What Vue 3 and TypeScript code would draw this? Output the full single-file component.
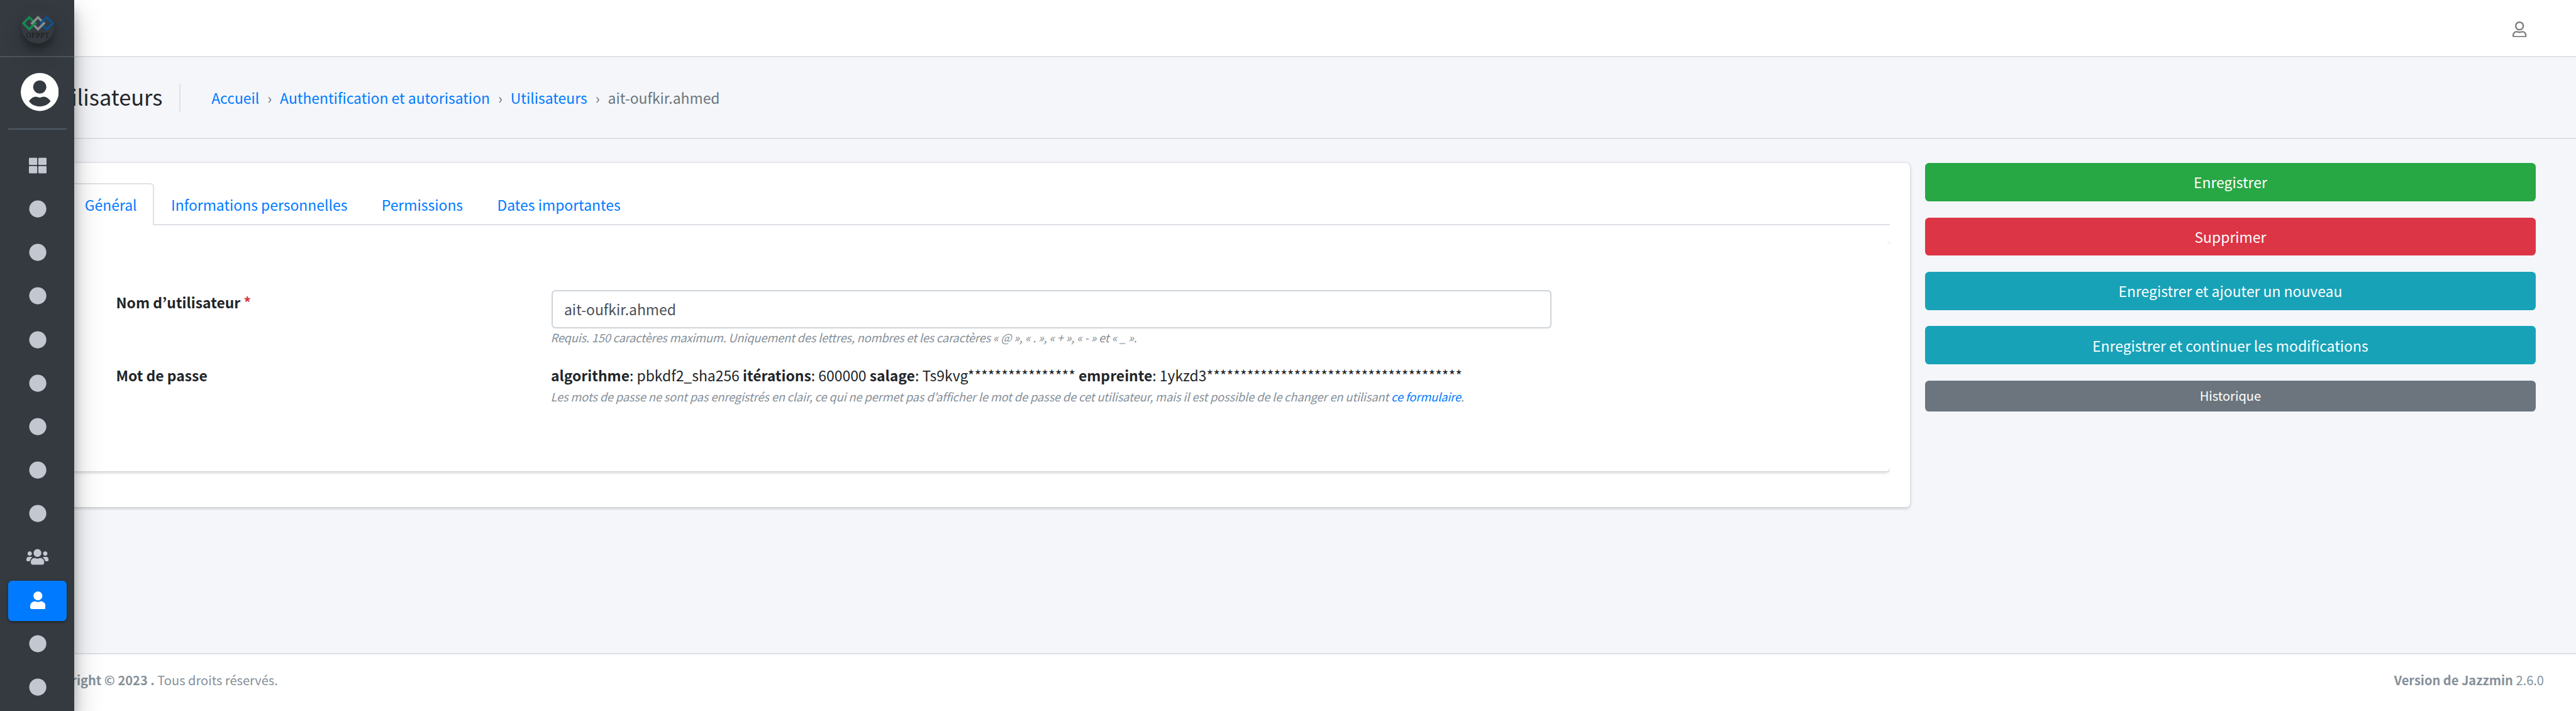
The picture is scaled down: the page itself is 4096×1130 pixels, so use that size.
<script setup lang="ts">
interface Icon {
  viewBox: string
  width: number
  d: string
}

interface NavItem {
  icon: Icon
  active?: boolean
}

interface Action {
  label: string
  kind: 'success' | 'danger' | 'info' | 'secondary'
}

const dashboard: Icon = {
  viewBox: '0 0 512 512',
  width: 28.16,
  d: 'M296 32h192c13.255 0 24 10.745 24 24v160c0 13.255-10.745 24-24 24H296c-13.255 0-24-10.745-24-24V56c0-13.255 10.745-24 24-24zm-80 0H24C10.745 32 0 42.745 0 56v160c0 13.255 10.745 24 24 24h192c13.255 0 24-10.745 24-24V56c0-13.255-10.745-24-24-24zM0 296v160c0 13.255 10.745 24 24 24h192c13.255 0 24-10.745 24-24V296c0-13.255-10.745-24-24-24H24c-13.255 0-24 10.745-24 24zm296 184h192c13.255 0 24-10.745 24-24V296c0-13.255-10.745-24-24-24H296c-13.255 0-24 10.745-24 24v160c0 13.255 10.745 24 24 24z',
}

const circle: Icon = {
  viewBox: '0 0 512 512',
  width: 28.16,
  d: 'M256 8C119 8 8 119 8 256s111 248 248 248 248-111 248-248S393 8 256 8z',
}

const users: Icon = {
  viewBox: '0 0 640 512',
  width: 35.2,
  d: 'M96 224c35.3 0 64-28.7 64-64s-28.7-64-64-64-64 28.7-64 64 28.7 64 64 64zm448 0c35.3 0 64-28.7 64-64s-28.7-64-64-64-64 28.7-64 64 28.7 64 64 64zm32 32h-64c-17.6 0-33.5 7.1-45.1 18.6 40.3 22.1 68.9 62 75.1 109.4h66c17.7 0 32-14.3 32-32v-32c0-35.3-28.7-64-64-64zm-256 0c61.9 0 112-50.1 112-112S381.9 32 320 32 208 82.1 208 144s50.1 112 112 112zm76.8 32h-8.3c-20.8 10-43.9 16-68.5 16s-47.6-6-68.5-16h-8.3C179.6 288 128 339.6 128 403.2V432c0 26.5 21.5 48 48 48h288c26.5 0 48-21.5 48-48v-28.8c0-63.6-51.6-115.2-115.2-115.2zm-223.7-13.4C161.5 263.1 145.6 256 128 256H64c-35.3 0-64 28.7-64 64v32c0 17.7 14.3 32 32 32h65.9c6.3-47.4 34.9-87.3 75.2-109.4z',
}

const user: Icon = {
  viewBox: '0 0 448 512',
  width: 24.64,
  d: 'M224 256c70.7 0 128-57.3 128-128S294.7 0 224 0 96 57.3 96 128s57.3 128 128 128zm89.6 32h-16.7c-22.2 10.2-46.9 16-72.9 16s-50.6-5.8-72.9-16h-16.7C60.2 288 0 348.2 0 422.4V464c0 26.5 21.5 48 48 48h352c26.5 0 48-21.5 48-48v-41.6c0-74.2-60.2-134.4-134.4-134.4z',
}

const navItems: NavItem[] = [
  { icon: dashboard },
  ...Array.from({ length: 8 }, () => ({ icon: circle })),
  { icon: users },
  { icon: user, active: true },
  { icon: circle },
  { icon: circle },
]

const crumbs = ['Accueil', 'Authentification et autorisation', 'Utilisateurs']
const tabs = ['Général', 'Informations personnelles', 'Permissions', 'Dates importantes']

const password = [
  { key: 'algorithme', value: 'pbkdf2_sha256' },
  { key: 'itérations', value: '600000' },
  { key: 'salage', value: 'Ts9kvg' + '*'.repeat(16) },
  { key: 'empreinte', value: '1ykzd3' + '*'.repeat(38) },
]

const actions: Action[] = [
  { label: 'Enregistrer', kind: 'success' },
  { label: 'Supprimer', kind: 'danger' },
  { label: 'Enregistrer et ajouter un nouveau', kind: 'info' },
  { label: 'Enregistrer et continuer les modifications', kind: 'info' },
  { label: 'Historique', kind: 'secondary' },
]
</script>

<template>
  <div class="wrapper">
    <header class="topbar">
      <svg class="topbar-user" viewBox="0 0 448 512">
        <path
          d="M313.6 304c-28.7 0-42.5 16-89.6 16-47.1 0-60.8-16-89.6-16C60.2 304 0 364.2 0 438.4V464c0 26.5 21.5 48 48 48h352c26.5 0 48-21.5 48-48v-25.6c0-74.2-60.2-134.4-134.4-134.4zM400 464H48v-25.6c0-47.6 38.8-86.4 86.4-86.4 14.6 0 38.3 16 89.6 16 51.7 0 74.9-16 89.6-16 47.6 0 86.4 38.8 86.4 86.4V464zM224 288c79.5 0 144-64.5 144-144S303.5 0 224 0 80 64.5 80 144s64.5 144 144 144zm0-240c52.9 0 96 43.1 96 96s-43.1 96-96 96-96-43.1-96-96 43.1-96 96-96z"
        />
      </svg>
    </header>

    <section class="page-head">
      <h1>Utilisateurs</h1>
      <ol class="breadcrumb">
        <template v-for="c in crumbs" :key="c">
          <li><a>{{ c }}</a></li>
          <li class="sep">›</li>
        </template>
        <li>ait-oufkir.ahmed</li>
      </ol>
    </section>

    <main class="content">
      <section class="card">
        <nav class="tabs">
          <a v-for="(t, i) in tabs" :key="t" class="tab" :class="{ active: i === 0 }">{{ t }}</a>
        </nav>
        <div class="pane">
          <div class="inner-card">
            <div class="field-row">
              <label>Nom d’utilisateur <span class="required">*</span></label>
              <div class="field">
                <div class="input">ait-oufkir.ahmed</div>
                <p class="help help-name">Requis. 150 caractères maximum. Uniquement des lettres, nombres et les caractères «&nbsp;@&nbsp;», «&nbsp;.&nbsp;», «&nbsp;+&nbsp;», «&nbsp;-&nbsp;» et «&nbsp;_&nbsp;».</p>
              </div>
            </div>
            <div class="field-row">
              <label>Mot de passe</label>
              <div class="field">
                <p class="hash">
                  <template v-for="p in password" :key="p.key"><strong>{{ p.key }}</strong>: {{ p.value + ' ' }}</template>
                </p>
                <p class="help help-pass">Les mots de passe ne sont pas enregistrés en clair, ce qui ne permet pas d’afficher le mot de passe de cet utilisateur, mais il est possible de le changer en utilisant <a>ce formulaire</a>.</p>
              </div>
            </div>
          </div>
        </div>
      </section>

      <aside class="actions">
        <button v-for="a in actions" :key="a.label" class="btn" :class="a.kind">{{ a.label }}</button>
      </aside>
    </main>

    <footer class="footer">
      <div><strong class="copyright">Copyright © 2023 .</strong> Tous droits réservés.</div>
      <div><strong>Version de Jazzmin</strong> 2.6.0</div>
    </footer>

    <aside class="sidebar">
      <div class="brand">
        <div class="logo">
          <svg viewBox="126 60 198 198">
            <g fill="none" stroke-width="13.4">
              <path stroke="#14894f" d="M173 103.5 208.5 139 173 174.5 137.5 139z" />
              <path stroke="#8a8d8f" d="M225 103.5 260.5 139 225 174.5 189.5 139z" />
              <path stroke="#10508c" d="M277 103.5 312.5 139 277 174.5 241.5 139z" />
              <path stroke="#14894f" d="M208.5 139 186 161.5" />
              <path stroke="#8a8d8f" d="M260.5 139 238 161.5" />
            </g>
            <text x="153" y="226" textLength="139">OFPPT</text>
          </svg>
        </div>
      </div>
      <div class="user-panel">
        <svg viewBox="41 145.5 75.5 75.5">
          <circle cx="78.75" cy="183.25" r="37.75" fill="#fff" />
          <g fill="#343a40">
            <circle cx="78.75" cy="173.3" r="13.2" />
            <path d="M57.3 201.5C61 196 66 192.7 71 192.7C75 192.7 75 194.2 78.75 194.2C82.5 194.2 82.5 192.7 86.5 192.7C91.5 192.7 96.5 196 100.3 201.5C96 208 88 212 78.75 212C69.5 212 61.5 208 57.3 201.5Z" />
          </g>
        </svg>
      </div>
      <nav class="side-nav">
        <a v-for="(n, i) in navItems" :key="i" class="side-link" :class="{ active: n.active }">
          <svg :viewBox="n.icon.viewBox" :style="{ width: n.icon.width + 'px' }"><path :d="n.icon.d" /></svg>
        </a>
      </nav>
    </aside>
  </div>
</template>

<style>
body {
  margin: 0;
  background: #f4f6f9;
}
</style>

<style scoped>
* {
  box-sizing: border-box;
}
.wrapper {
  position: relative;
  display: flex;
  flex-direction: column;
  width: 4096px;
  height: 1130px;
  overflow: hidden;
  background: #f4f6f9;
  color: #212529;
  font-family: "Noto Sans CJK JP", "Noto Sans", sans-serif;
  font-size: 22.92px;
  line-height: 38.4px;
  white-space: nowrap;
}
h1,
p,
ol {
  margin: 0;
  padding: 0;
  font-weight: 400;
}
a {
  color: #007bff;
}
svg {
  display: block;
  flex: none;
}

.topbar {
  flex: none;
  display: flex;
  justify-content: flex-end;
  height: 91.2px;
  padding: 33.6px 78.4px 0 0;
  background: #fff;
  border-bottom: 2px solid #dee2e6;
}
.topbar-user {
  width: 22.4px;
  height: 25.6px;
  fill: #808080;
}

.page-head {
  flex: none;
  display: flex;
  align-items: flex-start;
  height: 129.6px;
  padding: 38.8px 0 0 75.4px;
  border-bottom: 2px solid #dee2e6;
}
h1 {
  width: 209.4px;
  font-size: 34.38px;
  line-height: 46px;
}
.breadcrumb {
  display: flex;
  height: 44.8px;
  margin-top: 2.8px;
  padding: 3.4px 0 0 49.4px;
  border-left: 2px solid #dee2e6;
  list-style: none;
  color: #6c757d;
}
.sep {
  display: flex;
  justify-content: center;
  width: 32.8px;
}

.content {
  flex: 1;
  display: flex;
  align-items: flex-start;
  gap: 24px;
  padding: 38.4px 64px 0 76px;
}
.card {
  width: 2960.8px;
  height: 547.2px;
  padding: 32px 32px 0;
  background: #fff;
  border-radius: 6.4px;
  box-shadow: 0 0 1.6px rgba(0, 0, 0, 0.125), 0 1.6px 4.8px rgba(0, 0, 0, 0.2);
}
.tabs {
  display: flex;
  height: 67.2px;
  border-bottom: 2px solid #dee2e6;
}
.tab {
  height: 67.2px;
  padding: 12.8px 25.6px 0 24.8px;
  border: 2px solid transparent;
  border-bottom: 0;
  border-radius: 6.4px 6.4px 0 0;
}
.tab.active {
  background: #fff;
  border-color: #dee2e6;
}
.pane {
  height: 400px;
  margin-top: 25.6px;
  overflow: hidden;
}
.inner-card {
  height: 364.8px;
  padding: 76.8px 0 0 76.4px;
  border-radius: 6.4px;
  box-shadow: 0 0 1.6px rgba(0, 0, 0, 0.125), 0 1.6px 4.8px rgba(0, 0, 0, 0.2);
}
.field-row {
  display: flex;
  height: 116.4px;
}
label {
  width: 692.4px;
  font-weight: 700;
}
.required {
  color: #dc3545;
}
.field {
  width: 1590.4px;
}
.hash {
  margin-left: -0.8px;
}
.input {
  height: 60.8px;
  padding: 9.3px 18.2px;
  border: 2px solid #ced4da;
  border-radius: 6.4px;
  background: #fff;
  color: #495057;
}
.help {
  margin: -0.4px 0 0 -1.4px;
  color: #869099;
  font-size: 18.34px;
  font-style: italic;
  line-height: 30.7px;
}
.help-name {
  letter-spacing: -0.2px;
}
.help-pass {
  letter-spacing: -0.158px;
}

.actions {
  width: 971.2px;
  display: flex;
  flex-direction: column;
  gap: 25.6px;
}
.btn {
  height: 60.8px;
  padding: 0;
  border: 0;
  border-radius: 6.4px;
  color: #fff;
  font: inherit;
}
.success {
  background: #28a745;
}
.danger {
  background: #dc3545;
}
.info {
  background: #17a2b8;
}
.secondary {
  height: 49.6px;
  padding-bottom: 1px;
  background: #6c757d;
  font-size: 20.06px;
}

.footer {
  flex: none;
  display: flex;
  justify-content: space-between;
  height: 91.6px;
  padding: 22px 51px 0 0;
  border-top: 2px solid #dee2e6;
  background: #fff;
  color: #869099;
  font-size: 20.06px;
}
.copyright {
  display: inline-flex;
  justify-content: flex-end;
  width: 245.8px;
}

.sidebar {
  position: absolute;
  top: 0;
  left: 0;
  width: 118.4px;
  height: 1130px;
  background: #343a40;
  box-shadow: 0 22.4px 44.8px rgba(0, 0, 0, 0.25), 0 16px 16px rgba(0, 0, 0, 0.22);
}
.brand {
  height: 91.2px;
  padding: 16px 0 0 33.6px;
  border-bottom: 2px solid #4b545c;
}
.logo {
  width: 52.8px;
  height: 52.8px;
  border-radius: 50%;
  box-shadow: 0 16px 32px rgba(0, 0, 0, 0.19), 0 9.6px 9.6px rgba(0, 0, 0, 0.23);
}
.logo svg {
  width: 52.8px;
  height: 52.8px;
}
.logo text {
  fill: #17191c;
  font-family: "Liberation Serif", serif;
  font-size: 43px;
}
.user-panel {
  height: 115.2px;
  margin: 0 12.8px;
  padding: 25.2px 0 0 20px;
  border-bottom: 2px solid #4f5962;
}
.user-panel svg {
  width: 60.4px;
  height: 60.4px;
}
.side-nav {
  display: flex;
  flex-direction: column;
  gap: 5.12px;
  padding: 25.6px 12.8px 0;
}
.side-link {
  flex: none;
  display: flex;
  align-items: center;
  justify-content: center;
  height: 64px;
  padding: 0 0 1.6px 1.6px;
  border-radius: 6.4px;
  fill: #c2c7d0;
}
.side-link svg {
  height: 28.16px;
}
.side-link.active {
  background: #007bff;
  fill: #fff;
  box-shadow: 0 1.6px 4.8px rgba(0, 0, 0, 0.12), 0 1.6px 3.2px rgba(0, 0, 0, 0.24);
}
</style>
